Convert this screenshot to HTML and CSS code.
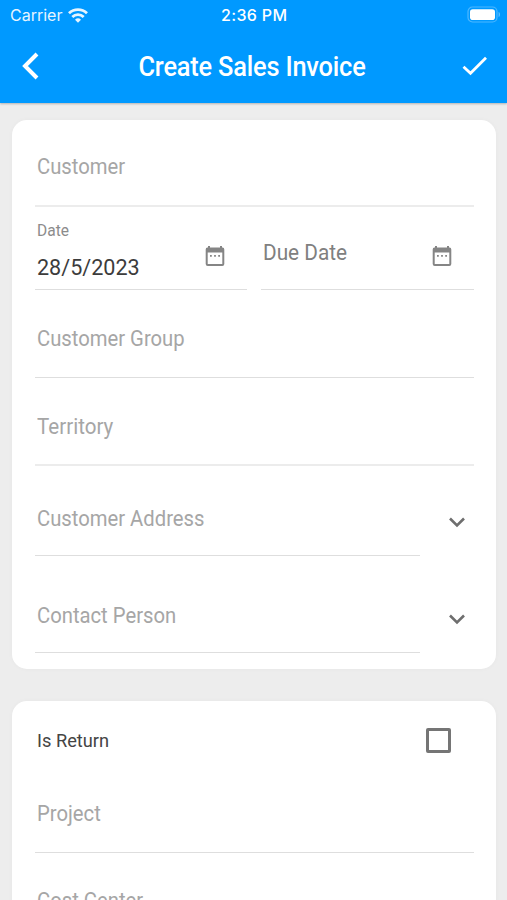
FILE: index.html
```html
<!DOCTYPE html>
<html lang="en">
<head>
<meta charset="utf-8">
<title>Create Sales Invoice</title>
<link rel="stylesheet" href="styles.css">
</head>
<body>
<header class="top">
  <div class="status">
    <div class="carrier"><span>Carrier</span>
      <svg width="20" height="15" viewBox="0 0 20 15" fill="none" stroke="#fff" stroke-width="2.8"><path d="M1 5.200a13 13 0 0 1 18 0M4.300 8.900a8.200 8.200 0 0 1 11.400 0"/><path d="M10 14.800l-3-3.100a4.300 4.300 0 0 1 6 0z" fill="#fff" stroke="none"/></svg>
    </div>
    <span class="time">2:36 PM</span>
    <svg class="battery" width="34" height="18" viewBox="0 0 34 18"><rect x="1" y="1" width="29" height="15" rx="4.5" fill="none" stroke="#fff" stroke-opacity=".3" stroke-width="1.2"/><rect x="3" y="3.2" width="25" height="10.8" rx="2.8" fill="#fff"/><path d="M31.600 6v5c1.800-.4 1.800-4.600 0-5z" fill="#fff" fill-opacity=".4"/></svg>
  </div>
  <div class="bar">
    <svg width="18" height="28" viewBox="0 0 18 28" fill="none" stroke="#fff" stroke-width="4"><path d="M15 2L3 14l12 12"/></svg>
    <h1 class="title">Create Sales Invoice</h1>
    <svg width="26" height="20" viewBox="0 0 26 20" fill="none" stroke="#fff" stroke-width="2.800"><path d="M1.500 10.700l7 6.600L24 1.800"/></svg>
  </div>
</header>
<main class="content">
  <section class="card first">
    <div class="field customer"><span class="label">Customer</span></div>
    <div class="dates">
      <div class="field date">
        <div class="filled"><span class="small">Date</span><span class="value">28/5/2023</span></div>
        <svg class="cal" width="20" height="22" viewBox="0 0 20 22"><path fill="#858585" fill-rule="evenodd" d="M3 1h2v1.500h10V1h2v1.500a2 2 0 0 1 2.300 2V19a2 2 0 0 1-2 2H2.700a2 2 0 0 1-2-2V4.500A2 2 0 0 1 3 2.500zM2.700 7.500V19h14.600V7.500zM5 10h1.800v1.800H5zm4.100 0h1.800v1.800H9.100zm4.100 0H15v1.800h-1.800z"/></svg>
      </div>
      <div class="field date">
        <span class="label due">Due Date</span>
        <svg class="cal" width="20" height="22" viewBox="0 0 20 22"><path fill="#858585" fill-rule="evenodd" d="M3 1h2v1.500h10V1h2v1.500a2 2 0 0 1 2.300 2V19a2 2 0 0 1-2 2H2.700a2 2 0 0 1-2-2V4.500A2 2 0 0 1 3 2.500zM2.700 7.500V19h14.600V7.500zM5 10h1.800v1.800H5zm4.100 0h1.800v1.800H9.100zm4.100 0H15v1.800h-1.800z"/></svg>
      </div>
    </div>
    <div class="field group"><span class="label">Customer Group</span></div>
    <div class="field territory"><span class="label wide">Territory</span></div>
    <div class="select">
      <div class="field address"><span class="label">Customer Address</span></div>
      <svg class="chev" width="18" height="12" viewBox="0 0 18 12" fill="none" stroke="#6e6e6e" stroke-width="2.600"><path d="M2 1.500l7 7 7-7"/></svg>
    </div>
    <div class="select">
      <div class="field contact"><span class="label">Contact Person</span></div>
      <svg class="chev" width="18" height="12" viewBox="0 0 18 12" fill="none" stroke="#6e6e6e" stroke-width="2.600"><path d="M2 1.500l7 7 7-7"/></svg>
    </div>
  </section>
  <section class="card second">
    <div class="check"><span class="return">Is Return</span><span class="box"></span></div>
    <div class="field project"><span class="label">Project</span></div>
    <div class="field cost"><span class="label">Cost Center</span></div>
  </section>
</main>
</body>
</html>
```
FILE: styles.css
```css
* { box-sizing: border-box; }
body {
  margin: 0;
  height: 900px;
  overflow: hidden;
  background: #ededed;
  font-family: Roboto, "Noto Sans", sans-serif;
  display: flex;
  flex-direction: column;
}
svg { display: block; flex: none; }
span { white-space: nowrap; }

.top {
  height: 103px;
  flex: none;
  background: #0099ff;
  color: #fff;
  box-shadow: 0 1px 2px rgba(0, 0, 0, .25);
}
.status {
  height: 30px;
  padding: 0 6px 0 10px;
  display: grid;
  grid-template-columns: 211px auto 1fr;
  align-items: center;
  font-family: Inter, sans-serif;
  font-size: 16px;
}
.carrier { display: flex; align-items: center; gap: 6px; opacity: .9; }
.time { font-weight: 500; font-size: 16px; letter-spacing: .35px; }
.battery { justify-self: end; }
.bar {
  height: 73px;
  padding: 0 19px 0 22px;
  display: grid;
  grid-template-columns: 18px 1fr 26px;
  align-items: center;
}
.bar svg { margin-bottom: 2px; }
.title {
  margin: 0 -2px 0 0;
  text-align: center;
  font-size: 27px;
  line-height: 34px;
  font-weight: 500;
  letter-spacing: -.2px;
  transform: scaleX(.94);
}

.content { flex: 1; min-height: 0; overflow: hidden; padding: 17px 11px 0 12px; display: flex; flex-direction: column; gap: 32px; }
.card { background: #fff; border-radius: 15px; box-shadow: 0 0 5px rgba(0, 0, 0, .03); padding: 0 22px 0 23px; flex: none; }
.first { height: 549px; }
.second { height: 300px; }

.field { border-bottom: 1px solid #dedede; padding-left: 2px; display: flex; align-items: flex-start; }
.label { font-size: 22px; line-height: 28px; color: #a6a6a6; transform: scaleX(.92); transform-origin: left; }
.wide { transform: scaleX(.935); }
.customer { height: 87px; padding-top: 33px; border-bottom: 2px solid #ececec; }
.dates { display: grid; grid-template-columns: 212px 213px; gap: 14px; }
.date { height: 83px; justify-content: space-between; padding-right: 22.500px; }
.cal { margin-top: 38px; }
.filled { display: flex; flex-direction: column; padding-top: 14px; }
.small { font-size: 16px; line-height: 20px; color: #8c8c8c; transform: scaleX(.97); transform-origin: left; }
.value { font-size: 22px; line-height: 28px; margin-top: 13px; color: #3c3c3c; transform: scaleX(.98); transform-origin: left; }
.due { margin-top: 32px; color: #808080; transform: scaleX(.945); }
.group { height: 88px; padding-top: 35px; }
.territory { height: 88px; padding-top: 35px; border-bottom: 2px solid #ececec; }
.select { display: grid; grid-template-columns: 385px 1fr; }
.address { height: 90px; padding-top: 39px; }
.contact { height: 97px; padding-top: 46px; }
.chev { margin: 51px 0 0 28px; }
.select + .select .chev { margin-top: 58px; }

.check { height: 78px; padding: 0 23px 0 2px; display: flex; align-items: center; justify-content: space-between; }
.return { font-size: 19px; color: #444; transform: scaleX(.96); transform-origin: left; }
.box { width: 25px; height: 25px; border: 3px solid #757575; border-radius: 2px; }
.project { height: 74px; padding-top: 21px; }
.cost { height: 88px; padding-top: 34px; }
```
